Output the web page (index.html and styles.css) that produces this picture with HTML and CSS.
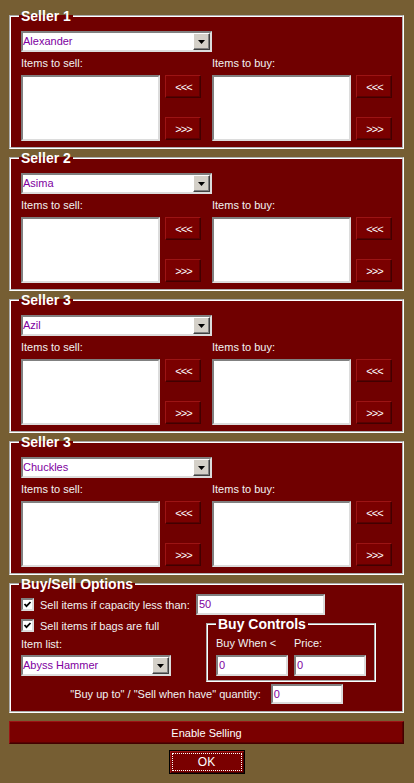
FILE: index.html
```html
<!DOCTYPE html>
<html>
<head>
<meta charset="utf-8">
<title>Trader</title>
<link rel="stylesheet" href="styles.css">
</head>
<body>
<div class="page">

  <fieldset class="frame seller">
    <legend>Seller 1</legend>
    <div class="select sel-wide"><span class="val">Alexander</span><i class="drop"><svg width="7" height="4" viewBox="0 0 7 4"><polygon points="0,0 7,0 3.5,4" fill="#000"/></svg></i></div>
    <div class="lists">
      <div class="group">
        <div class="lbl">Items to sell:</div>
        <div class="pair"><div class="listbox"></div><div class="btns"><div class="btn sm">&lt;&lt;&lt;</div><div class="btn sm">&gt;&gt;&gt;</div></div></div>
      </div>
      <div class="group">
        <div class="lbl">Items to buy:</div>
        <div class="pair"><div class="listbox"></div><div class="btns"><div class="btn sm">&lt;&lt;&lt;</div><div class="btn sm">&gt;&gt;&gt;</div></div></div>
      </div>
    </div>
  </fieldset>

  <fieldset class="frame seller">
    <legend>Seller 2</legend>
    <div class="select sel-wide"><span class="val">Asima</span><i class="drop"><svg width="7" height="4" viewBox="0 0 7 4"><polygon points="0,0 7,0 3.5,4" fill="#000"/></svg></i></div>
    <div class="lists">
      <div class="group">
        <div class="lbl">Items to sell:</div>
        <div class="pair"><div class="listbox"></div><div class="btns"><div class="btn sm">&lt;&lt;&lt;</div><div class="btn sm">&gt;&gt;&gt;</div></div></div>
      </div>
      <div class="group">
        <div class="lbl">Items to buy:</div>
        <div class="pair"><div class="listbox"></div><div class="btns"><div class="btn sm">&lt;&lt;&lt;</div><div class="btn sm">&gt;&gt;&gt;</div></div></div>
      </div>
    </div>
  </fieldset>

  <fieldset class="frame seller">
    <legend>Seller 3</legend>
    <div class="select sel-wide"><span class="val">Azil</span><i class="drop"><svg width="7" height="4" viewBox="0 0 7 4"><polygon points="0,0 7,0 3.5,4" fill="#000"/></svg></i></div>
    <div class="lists">
      <div class="group">
        <div class="lbl">Items to sell:</div>
        <div class="pair"><div class="listbox"></div><div class="btns"><div class="btn sm">&lt;&lt;&lt;</div><div class="btn sm">&gt;&gt;&gt;</div></div></div>
      </div>
      <div class="group">
        <div class="lbl">Items to buy:</div>
        <div class="pair"><div class="listbox"></div><div class="btns"><div class="btn sm">&lt;&lt;&lt;</div><div class="btn sm">&gt;&gt;&gt;</div></div></div>
      </div>
    </div>
  </fieldset>

  <fieldset class="frame seller">
    <legend>Seller 3</legend>
    <div class="select sel-wide"><span class="val">Chuckles</span><i class="drop"><svg width="7" height="4" viewBox="0 0 7 4"><polygon points="0,0 7,0 3.5,4" fill="#000"/></svg></i></div>
    <div class="lists">
      <div class="group">
        <div class="lbl">Items to sell:</div>
        <div class="pair"><div class="listbox"></div><div class="btns"><div class="btn sm">&lt;&lt;&lt;</div><div class="btn sm">&gt;&gt;&gt;</div></div></div>
      </div>
      <div class="group">
        <div class="lbl">Items to buy:</div>
        <div class="pair"><div class="listbox"></div><div class="btns"><div class="btn sm">&lt;&lt;&lt;</div><div class="btn sm">&gt;&gt;&gt;</div></div></div>
      </div>
    </div>
  </fieldset>

  <fieldset class="frame opts">
    <legend>Buy/Sell Options</legend>
    <div class="row1">
      <div class="chk c1"><i class="box"><svg width="9" height="9" viewBox="0 0 9 9"><polyline points="1.5,4 3.5,6.2 7.5,2" fill="none" stroke="#000" stroke-width="1.8"/></svg></i><span>Sell items if capacity less than:</span></div>
      <div class="input cap">50</div>
    </div>
    <div class="mid">
      <div class="left">
        <div class="chk c2"><i class="box"><svg width="9" height="9" viewBox="0 0 9 9"><polyline points="1.5,4 3.5,6.2 7.5,2" fill="none" stroke="#000" stroke-width="1.8"/></svg></i><span>Sell items if bags are full</span></div>
        <div class="lbl il-lbl">Item list:</div>
        <div class="select sel-item"><span class="val">Abyss Hammer</span><i class="drop"><svg width="7" height="4" viewBox="0 0 7 4"><polygon points="0,0 7,0 3.5,4" fill="#000"/></svg></i></div>
      </div>
      <fieldset class="frame buyc">
        <legend>Buy Controls</legend>
        <div class="bc">
          <div class="field"><div class="lbl">Buy When &lt;</div><div class="input small">0</div></div>
          <div class="field"><div class="lbl">Price:</div><div class="input small">0</div></div>
        </div>
      </fieldset>
    </div>
    <div class="qty"><span>"Buy up to" / "Sell when have" quantity:</span><div class="input small q">0</div></div>
  </fieldset>

  <div class="btn wide">Enable Selling</div>
  <div class="okrow"><div class="ok"><div class="focus">OK</div></div></div>
</div>
</body>
</html>
```

FILE: styles.css
```css
* { box-sizing: border-box; }
html, body { margin: 0; }
body {
  background: #765e33;
  font-family: "Liberation Sans", Arial, sans-serif;
  font-size: 11px;
  color: #f2f2f2;
  width: 414px;
  height: 783px;
  overflow: hidden;
}
.page {
  padding: 8px 10px 0 9px;
  display: flex;
  flex-direction: column;
}
.frame {
  margin: 0 0 1px;
  border: 2px groove #ffffff;
  background: #700000;
  padding: 7px 10px 6px;
  min-width: 0;
}
.frame legend {
  padding: 0 2px;
  margin-left: -2px;
  font: bold 14px/16px "Liberation Sans", Arial, sans-serif;
  color: #ffffff;
}
.select {
  height: 21px;
  display: flex;
  align-items: center;
  background: #fff;
  border: 2px solid;
  border-color: #808080 #dcdcdc #dcdcdc #808080;
  color: #8000a0;
  line-height: 13px;
}
.select .val { flex: 1; }
.drop {
  width: 17px;
  height: 17px;
  background: #d4d0c8;
  border: 1px solid;
  border-color: #ffffff #404040 #404040 #ffffff;
  box-shadow: inset -1px -1px 0 #808080;
  display: flex;
  align-items: center;
  justify-content: center;
}
.sel-wide { width: 191px; }
.lists {
  display: flex;
  justify-content: space-between;
  margin-top: 5px;
}
.group { display: flex; flex-direction: column; }
.lbl { line-height: 13px; height: 13px; white-space: nowrap; }
.group .lbl { margin-bottom: 5px; }
.pair { display: flex; gap: 5px; }
.listbox {
  width: 139px;
  height: 66px;
  background: #fff;
  border: 2px solid;
  border-color: #808080 #dcdcdc #dcdcdc #808080;
}
.btns {
  width: 36px;
  display: flex;
  flex-direction: column;
  justify-content: space-between;
  padding-bottom: 1px;
}
.btn {
  background: #7a0000;
  border: 1px solid;
  border-color: #9c1414 #420000 #420000 #9c1414;
  box-shadow: inset -1px -1px 0 #5a0000;
  color: #fff;
  display: flex;
  align-items: center;
  justify-content: center;
}
.btn.sm {
  height: 23px;
  font-size: 11px;
  letter-spacing: -1px;
  padding-left: 1px;
}
.opts { padding: 2px 10px 7px; }
.row1 { display: flex; align-items: center; height: 21px; }
.chk { display: flex; align-items: center; gap: 6px; white-space: nowrap; }
.c1 { width: 175px; }
.c2 { height: 19px; }
.box {
  width: 13px;
  height: 13px;
  background: #fff;
  border: 2px solid;
  border-color: #808080 #dcdcdc #dcdcdc #808080;
  display: flex;
}
.input {
  height: 21px;
  background: #fff;
  border: 2px solid;
  border-color: #808080 #dcdcdc #dcdcdc #808080;
  color: #8000a0;
  line-height: 17px;
  padding-left: 1px;
}
.input.cap { width: 129px; }
.input.small { width: 72px; }
.input.q { height: 20px; line-height: 16px; }
.mid { display: flex; margin-top: 1px; }
.left { width: 185px; display: flex; flex-direction: column; }
.il-lbl { margin-top: 3px; }
.sel-item { width: 150px; margin-top: 4px; }
.buyc {
  margin: 0;
  padding: 5px 8px 4px;
  width: 170px;
}
.buyc legend { margin-left: 0; }
.bc { display: flex; gap: 6px; }
.field { display: flex; flex-direction: column; gap: 5px; }
.qty {
  display: flex;
  align-items: center;
  justify-content: center;
  gap: 10px;
  margin-top: 2px;
}
.btn.wide {
  margin-top: 7px;
  height: 23px;
  font-size: 11px;
}
.okrow { display: flex; justify-content: center; margin-top: 6px; }
.ok {
  width: 76px;
  height: 24px;
  border: 1px solid #000;
  background: #7a0000;
  box-shadow: inset 1px 1px 0 #9c1414, inset -1px -1px 0 #420000;
  padding: 2px;
}
.focus {
  height: 100%;
  border: 1px dotted #ffffff;
  color: #fff;
  font-size: 12px;
  display: flex;
  align-items: center;
  justify-content: center;
}
```
